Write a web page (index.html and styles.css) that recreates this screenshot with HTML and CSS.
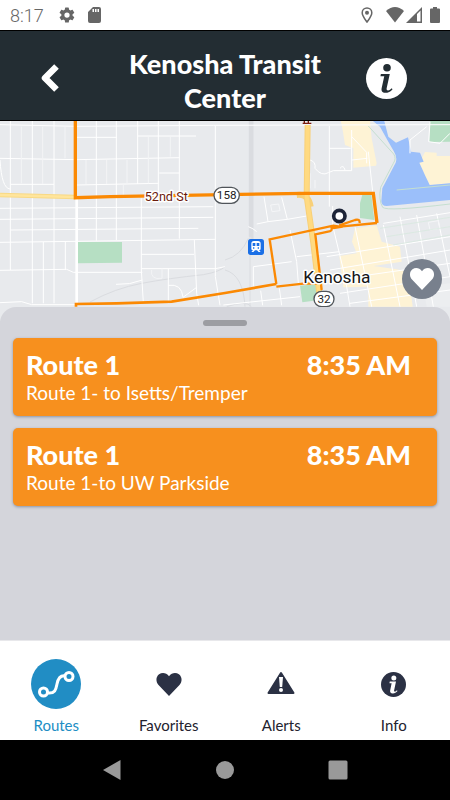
FILE: index.html
```html
<!DOCTYPE html>
<html lang="en">
<head>
<meta charset="utf-8">
<meta name="viewport" content="width=device-width, initial-scale=1">
<title>Kenosha Transit Center</title>
<link rel="stylesheet" href="styles.css">
</head>
<body>
<div class="status">
  <span class="clock">8:17</span>
  <svg class="gear" width="18" height="18" viewBox="0 0 24 24" aria-hidden="true"><path d="M19.4 13a7.500 7.500 0 0 0 0-2l2.100-1.600c.2-.2.300-.5.100-.7l-2-3.400c-.1-.2-.4-.3-.6-.2l-2.500 1a7.300 7.300 0 0 0-1.700-1l-.4-2.600a.5.5 0 0 0-.5-.5h-4a.5.5 0 0 0-.5.5L9 5.100a7.700 7.700 0 0 0-1.700 1l-2.500-1c-.2-.1-.5 0-.6.2l-2 3.400c-.1.2-.1.500.1.700L4.500 11a7.900 7.900 0 0 0 0 2l-2.200 1.600c-.2.2-.2.500-.1.700l2 3.400c.1.200.4.300.6.200l2.500-1c.5.400 1.100.7 1.700 1l.4 2.600c0 .3.200.5.500.5h4c.3 0 .5-.2.500-.5l.4-2.600c.6-.3 1.200-.6 1.700-1l2.500 1c.2.100.5 0 .6-.2l2-3.400c.1-.2.100-.5-.1-.7zM12 15.500a3.500 3.500 0 1 1 0-7 3.500 3.500 0 0 1 0 7z"/></svg>
  <svg class="card-icon" width="13" height="16" viewBox="0 0 13 16" aria-hidden="true"><path fill-rule="evenodd" d="M5 0h6q2 0 2 2v12q0 2-2 2H2q-2 0-2-2V5zM4.500 2v3h1.500V2zM7 2v3h1.500V2zM9.500 2v3h1.500V2z"/></svg>
  <div class="signals">
    <svg class="pin" width="12" height="16" viewBox="0 0 12 16" aria-hidden="true"><path fill="none" stroke="currentColor" stroke-width="1.500" d="M6 15C3.500 11.500 1.200 8.800 1.200 5.700a4.800 4.800 0 0 1 9.600 0C10.800 8.800 8.500 11.500 6 15z"/><circle cx="6" cy="5.700" r="2"/></svg>
    <svg width="18" height="16" viewBox="0 0 18 16" aria-hidden="true"><path d="M0 4Q9-4 18 4L9 15.500z"/></svg>
    <svg width="16" height="16" viewBox="0 0 16 16" aria-hidden="true"><path fill-rule="evenodd" d="M16 0v16H0zM11 7v7.500h3.500V3.500z"/></svg>
    <svg class="battery" width="10" height="16" viewBox="0 0 10 16" aria-hidden="true"><path d="M3 0h4v1.500h2q1 0 1 1V15q0 1-1 1H1q-1 0-1-1V2.500q0-1 1-1h2z"/></svg>
  </div>
</div>

<header class="header">
  <button class="header-btn" aria-label="Back"><svg width="20" height="30" viewBox="0 0 20 30"><path d="M16.500 3.500L5 15 16.500 26.500" fill="none" stroke="#fff" stroke-width="6.500" stroke-linejoin="round"/></svg></button>
  <h1>Kenosha Transit Center</h1>
  <button class="header-btn info-btn" aria-label="Information"><svg width="41" height="41" viewBox="0 0 40 40"><circle cx="20" cy="20" r="20" fill="#fff"/><g fill="#232d33"><circle cx="20.500" cy="9.500" r="3.700"/><path d="M14.500 15.500h8.700l-3 13.800c-.4 1.600.1 2.300 1.300 2.300 1.300 0 2.500-.8 3.600-2l.8.900c-2 2.500-4.400 3.500-7 3.500-3.200 0-4.200-1.800-3.600-4.700l2.500-11.600h-3.700z"/></g></svg></button>
</header>

<main>
  <section class="map" aria-label="Map">
    <svg class="map-art" viewBox="0 3 1350 600" preserveAspectRatio="xMidYMid slice">
      <rect y="3" width="1350" height="600" fill="#e8eaed"/>
      <g fill="#fef3d5">
        <path d="M1022 0H1110L1115 55L1130 130L1128 137L1060 143V85L1035 75L1028 30z"/>
        <path d="M1258 128L1275 96L1310 98V108H1350V190L1290 196L1276 168z"/>
        <path d="M1065 325L1130 316L1145 365L1200 380L1205 425L1120 438L1190 448L1225 455L1238 560H1105V500L1030 502L1018 408L1070 400L1056 365z"/>
        <path d="M1270 500L1350 490V560H1280z" fill="#eceef0"/>
      </g>
      <path fill="#9bbffa" d="M1115 0H1152L1165 50L1188 68L1224 52L1233 95L1260 98L1271 125L1258 128L1276 168L1289 195L1350 190V240L1160 258Q1144 258 1144 243L1147 205L1187 128Q1193 112 1181 93L1162 60L1140 20z"/>
      <g fill="#b6dfc3">
        <path d="M234 366H366V428L234 430z"/>
        <path d="M1290 0H1350V65L1288 66z"/>
        <path d="M1087 224H1114L1123 300L1080 294V250z"/>
        <path d="M900 497L950 492L958 540L907 547z"/>
      </g>
      <path d="M1105 18L1181 102Q1190 115 1180 130L1142 202Q1135 240 1148 262Q1160 275 1350 252M1190 210L1350 195" fill="none" stroke="#c5dfd0" stroke-width="3"/>
      <g fill="none" stroke="#dadce0" stroke-width="4">
        <path d="M750 0V560M270 546Q345 505 425 490T610 464Q660 455 675 440" stroke-width="3"/>
        <path d="M750 0V350M757 0V360" stroke-width="7"/>
        <path d="M680 560Q740 540 754 560M675 420Q722 408 745 355M675 450Q730 465 735 560" stroke-width="3"/>
      </g>
      <g fill="none" stroke="#fff" stroke-width="3">
        <path d="M0 14L230 19L640 16L1350 14M0 115L230 119L538 113M230 52H350M414 48H588M32 193H162M230 195L475 190M0 265L640 260M0 298L640 292M32 330L595 325M0 367L230 364L646 358M0 451L200 448L220 457H427M425 403H582M425 446H646L675 440M0 548L65 545L95 554H228M348 493Q390 495 427 480M478 159H538"/>
        <path d="M31 3V450M97 3V550M162 3V550M130 366V550M196 366V450M289 3V362M349 3V360M413 3V192M424 235V450L430 548M475 3V230M538 3V356M583 360L590 520L596 556M646 18V470L660 556M505 446V550M505 496Q545 490 549 532L590 502M0 120Q5 205 30 207"/>
        <path d="M64 20V190M128 20V192M195 20V115M258 120V192M320 120V192M381 120V192M445 50V190M511 50V110M370 192V225M486 446V475Q450 480 455 450" stroke="#f3f4f6"/>
        <path d="M998 258V330M988 85H1052M988 18V260M930 120Q948 125 945 145Q965 170 985 158L1000 152H1055V30M1055 50L1100 97V130M1055 120L1102 115M1105 95L1118 215M1020 145Q1030 132 1035 150"/>
        <path d="M792 230L804 305L770 312M845 232L862 298L804 305M862 298L920 288M870 330L890 425L895 490M745 320Q760 325 770 335M760 440L875 425M760 440V500M782 512L788 556M838 505L845 556M670 555L900 530M890 410L1018 395M1000 325L1035 470L1050 560M1065 320L1115 560M1150 315L1200 560M1200 290L1250 560M1250 285L1300 560M1310 280L1350 470M980 410L1350 350M990 450L1350 390M1000 480L1350 430M1020 520L1350 470M1050 550L1350 510M1150 310L1350 278M1290 5L1286 65L1320 70L1350 40M1230 100V60L1280 20"/>
        <path d="M812 255L836 252L840 272L816 275zM1285 307L1315 302L1320 325L1290 330zM930 160V205M945 180V205" stroke="#f5f6f8"/>
      </g>
      <path d="M1180 375L1350 345M1140 325L1350 292M1160 350L1350 320" stroke="#d4e8dc" stroke-width="2"/>
      <path d="M230 235V550" stroke="#fff" stroke-width="8"/>
      <path d="M0 225L226 231" stroke="#f8d985" stroke-width="13"/>
      <path d="M0 225L226 231" stroke="#ffe59c" stroke-width="7"/>
      <path d="M923 15L920 230L940 370L958 520M890 225Q925 220 932 260" fill="none" stroke="#f8d079" stroke-width="18"/>
      <path d="M923 15L920 230L940 370L958 520" fill="none" stroke="#ffda81" stroke-width="12"/>
      <g fill="none" stroke="#fb8903">
        <path stroke-width="10" d="M226 0V233L330 230L675 224L910 220H1120L1131 309"/>
        <path stroke-width="7" d="M1131 309L1020 320L1000 317L809 358L829 492M1018 316L1065 300Q1080 296 1079 309M1028 320L995 325Q997 333 984 335L946 343L965 510M829 500L910 491H950"/>
        <path stroke-width="8" d="M228 560V552L350 550L515 545L675 519L829 492"/>
      </g>
      <path d="M908 10H934M913 0V10M925 0V10" fill="none" stroke="#7a1a0e" stroke-width="4"/>
      <g class="map-text">
        <text class="street" x="434" y="243">52nd St</text>
        <text class="city" x="910" y="488">Kenosha</text>
        <g fill="#fff" stroke="#50555a" stroke-width="4"><rect x="642" y="202" width="76" height="48" rx="24"/><rect x="942" y="514" width="60" height="46" rx="23"/></g>
        <text class="shield" x="680" y="237">158</text>
        <text class="shield" x="972" y="548">32</text>
      </g>
      <circle cx="1018" cy="288" r="17" fill="#fff" stroke="#1d2438" stroke-width="11"/>
      <rect x="744" y="357" width="48" height="48" rx="8" fill="#1a6fe6"/>
      <path fill="#fff" fill-rule="evenodd" d="M762 363H774Q782 363 782 371V386Q782 391 777 391L782 396H776L771 391H765L760 396H754L759 391Q754 391 754 386V371Q754 363 762 363zM758 369V378H766V369zM770 369V378H778V369zM759 382V386H763V382zM773 382V386H777V382z"/>
    </svg>
    <button class="fav" aria-label="Add to favorites"><svg width="24" height="22" viewBox="0 0 24 22"><path fill="#fff" d="M12 22L2 11.500C-1 8.300-.5 3.500 2.500 1.300 5.500-.8 9.500-.2 12 3.200 14.500-.2 18.500-.8 21.500 1.300c3 2.200 3.500 7 .5 10.200z"/></svg></button>
  </section>

  <section class="sheet">
    <div class="handle"></div>
    <ul class="routes">
      <li><a class="route" href="#tremper"><span class="top"><strong>Route 1</strong><time>8:35 AM</time></span><span class="dest">Route 1- to Isetts/Tremper</span></a></li>
      <li><a class="route" href="#parkside"><span class="top"><strong>Route 1</strong><time>8:35 AM</time></span><span class="dest">Route 1-to UW Parkside</span></a></li>
    </ul>
  </section>
</main>

<nav class="tabs">
  <a class="tab active" href="#routes"><span class="tab-icon"><svg width="50" height="50" viewBox="0 0 50 50"><circle cx="25" cy="25" r="25" fill="#218dc4"/><g fill="none" stroke="#fff" stroke-width="3"><circle cx="12.500" cy="33" r="4"/><circle cx="38" cy="17.500" r="4"/><path d="M16.500 34c8 1 8.500-4 9.500-9s3-9 8.500-8"/></g></svg></span>Routes</a>
  <a class="tab" href="#favorites"><span class="tab-icon"><svg width="26" height="23" viewBox="0 0 24 22"><path fill="#2b3144" d="M12 22L2 11.500C-1 8.300-.5 3.500 2.500 1.300 5.500-.8 9.500-.2 12 3.200 14.500-.2 18.500-.8 21.500 1.300c3 2.200 3.500 7 .5 10.200z"/></svg></span>Favorites</a>
  <a class="tab" href="#alerts"><span class="tab-icon alert-icon"><svg width="28" height="24" viewBox="0 0 28 24"><path fill="#2b3144" stroke="#2b3144" stroke-width="2" stroke-linejoin="round" d="M14 2l12.500 20h-25z"/><path fill="#fff" d="M12 6h4l-.8 10h-2.400z"/><circle cx="14" cy="19" r="2" fill="#fff"/></svg></span>Alerts</a>
  <a class="tab" href="#info"><span class="tab-icon"><svg width="25" height="25" viewBox="0 0 40 40"><circle cx="20" cy="20" r="20" fill="#2b3144"/><g fill="#fff"><circle cx="20.500" cy="9.500" r="4"/><path d="M14 15h10l-3 14c-.4 1.600.1 2.300 1.300 2.300 1.300 0 2-.8 3.100-2l1 1.200c-2 2.500-4.400 3.800-7.500 3.800-3.700 0-4.800-2-4.200-5L17 18h-3.500z"/></g></svg></span>Info</a>
</nav>

<div class="system">
  <button aria-label="System back"><svg width="20" height="20" viewBox="0 0 20 20"><path d="M18.500 0v20L1 10z"/></svg></button>
  <button aria-label="Home"><svg width="20" height="20" viewBox="0 0 20 20"><circle cx="10" cy="10" r="9"/></svg></button>
  <button aria-label="Overview"><svg width="20" height="20" viewBox="0 0 20 20"><rect x=".5" y=".5" width="19" height="19" rx="1.500"/></svg></button>
</div>
</body>
</html>
```
FILE: styles.css
```css
* { box-sizing: border-box; }

body {
  margin: 0;
  min-height: 100vh;
  display: flex;
  flex-direction: column;
  background: #d4d5db;
  font-family: Lato, "Open Sans", sans-serif;
}

button {
  padding: 0;
  border: 0;
  background: none;
  cursor: pointer;
}

svg { display: block; }
a { color: inherit; text-decoration: none; }

.status {
  height: 30px;
  padding: 0 10px;
  display: flex;
  align-items: center;
  background: #fff;
  color: #666;
  fill: #666;
}
.clock {
  width: 48px;
  font: 300 18px Roboto, sans-serif;
}
.card-icon { margin-left: 12px; }
.signals {
  margin-left: auto;
  display: flex;
  align-items: center;
  gap: 2px;
}
.pin { margin-right: 11px; }
.battery { margin-left: 6px; }

.header {
  min-height: 91px;
  padding: 0 14px;
  display: grid;
  grid-template-columns: 72px 1fr 72px;
  align-items: center;
  border-top: 1px solid #000;
  border-bottom: 1px solid #000;
  background: #232d33;
}
.header-btn {
  display: flex;
  justify-content: center;
  padding-top: 5px;
}
.info-btn { padding-right: 28px; }
h1 {
  margin: 0;
  padding: 10px 24px 0;
  color: #fff;
  font-size: 27px;
  font-weight: 900;
  line-height: 34px;
  text-align: center;
}

main {
  flex: 1;
  display: flex;
  flex-direction: column;
}
.map {
  position: relative;
  height: 200px;
}
.map-art {
  width: 100%;
  height: 100%;
}
.map-text { font-family: Roboto, sans-serif; }
.street, .city {
  paint-order: stroke;
  stroke: #fff;
  stroke-width: 9px;
  stroke-linejoin: round;
}
.street { font-size: 38px; fill: #6b1a0c; }
.city { font-size: 52px; fill: #151515; }
.shield { font-size: 35px; fill: #222; text-anchor: middle; }

.fav {
  position: absolute;
  right: 8px;
  bottom: 22px;
  width: 40px;
  height: 40px;
  display: grid;
  place-items: center;
  border-radius: 50%;
  background: #78808d;
}

.sheet {
  position: relative;
  flex: 1;
  margin-top: -14px;
  padding: 13px 13px 24px;
  border-radius: 16px 16px 0 0;
  background: #d4d5db;
}
.handle {
  width: 44px;
  height: 6px;
  margin: 0 auto 12px;
  border-radius: 3px;
  background: #9c9da2;
}
.routes {
  margin: 0;
  padding: 0;
  display: grid;
  gap: 12px;
  list-style: none;
}
.route {
  display: block;
  min-height: 78px;
  padding: 11px 26px 11px 13px;
  border-radius: 5px;
  background: #f7901e;
  box-shadow: 0 1px 3px #8b94a5;
  color: #fff;
}
.top {
  display: flex;
  justify-content: space-between;
  font-size: 27px;
  font-weight: 900;
  line-height: 32px;
}
.top strong { font-weight: 900; }
.dest {
  display: block;
  font-size: 19px;
  line-height: 24px;
}

.tabs {
  min-height: 100px;
  display: grid;
  grid-template-columns: repeat(4, 1fr);
  border-top: 1px solid #e8e8eb;
  background: #fff;
  color: #22222e;
}
.tab {
  padding-top: 18px;
  display: flex;
  flex-direction: column;
  align-items: center;
  font-size: 15px;
  line-height: 20px;
}
.tab-icon {
  height: 50px;
  margin-bottom: 6px;
  display: grid;
  place-items: center;
}
.alert-icon { padding-bottom: 2px; }
.active { color: #218dc4; }

.system {
  height: 60px;
  display: flex;
  justify-content: center;
  align-items: center;
  gap: 93px;
  background: #000;
  fill: #999;
}
```
